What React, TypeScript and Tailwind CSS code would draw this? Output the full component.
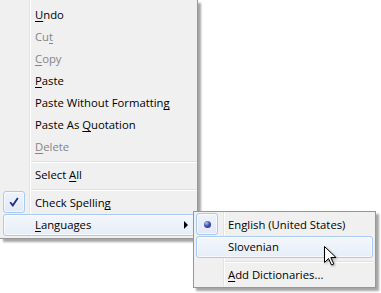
import React from "react";

type Item =
  | { sep: true }
  | {
      sep?: false;
      label: string;
      acc?: number;
      disabled?: boolean;
      checked?: boolean;
      radio?: boolean;
      hover?: boolean;
      arrow?: boolean;
    };

const mainItems: Item[] = [
  { label: "Undo", acc: 0 },
  { label: "Cut", acc: 2, disabled: true },
  { label: "Copy", acc: 0, disabled: true },
  { label: "Paste", acc: 0 },
  { label: "Paste Without Formatting", acc: 23 },
  { label: "Paste As Quotation", acc: 9 },
  { label: "Delete", acc: 0, disabled: true },
  { sep: true },
  { label: "Select All", acc: 7 },
  { sep: true },
  { label: "Check Spelling", acc: 13, checked: true },
  { label: "Languages", acc: 0, hover: true, arrow: true },
];

const subItems: Item[] = [
  { label: "English (United States)", radio: true },
  { label: "Slovenian", hover: true },
  { sep: true },
  { label: "Add Dictionaries...", acc: 0 },
];

function Label({ text, acc }: { text: string; acc?: number }) {
  if (acc === undefined) return <>{text}</>;
  return (
    <>
      {text.slice(0, acc)}
      <span className="underline underline-offset-[2px] decoration-[1px]">{text[acc]}</span>
      {text.slice(acc + 1)}
    </>
  );
}

function Row({ item, sepRight }: { item: Item; sepRight: string }) {
  if (item.sep) {
    return (
      <div className={`h-[6px] pt-[3px] ml-[28px] ${sepRight}`}>
        <div className="h-[1px] bg-[#e0e0e0]" />
        <div className="h-[1px] bg-white" />
      </div>
    );
  }
  return (
    <div className="relative h-[22px] flex items-center">
      {item.hover && (
        <div className="absolute inset-0 rounded-[3px] border border-[#a9cbf3] bg-gradient-to-b from-[#f3f7fc] to-[#e7eef8] shadow-[inset_0_0_0_1px_rgba(255,255,255,0.6)]" />
      )}
      {(item.checked || item.radio) && (
        <div className="absolute left-0 top-[-1px] w-[22px] h-[22px] rounded-[3px] border border-[#a9cbf3] bg-gradient-to-b from-[#eef3fa] to-[#e2eaf6] shadow-[inset_0_0_0_1px_rgba(255,255,255,0.6)] flex items-center justify-center">
          {item.checked && (
            <svg width="10" height="10" viewBox="0 0 10 10">
              <path d="M1.2 5.2 L3.8 8.4 L8.8 1" fill="none" stroke="#1d2a86" strokeWidth="1.8" strokeLinejoin="miter" />
            </svg>
          )}
          {item.radio && (
            <div className="w-[7px] h-[7px] rounded-full bg-[radial-gradient(circle_at_35%_30%,#b8c0f0_0%,#4452b8_45%,#1b2478_100%)]" />
          )}
        </div>
      )}
      <span
        className={`relative pl-[32px] whitespace-nowrap ${item.disabled ? "text-[#858585]" : "text-black"}`}
      >
        <Label text={item.label} acc={item.acc} />
      </span>
      {item.arrow && (
        <div className="absolute right-[7px] top-[7px] w-0 h-0 border-y-[4px] border-y-transparent border-l-[4px] border-l-black" />
      )}
    </div>
  );
}

export default function App() {
  return (
    <div
      className="relative w-[381px] h-[293px] overflow-hidden bg-white text-[11.3px] leading-none"
      style={{ fontFamily: '"Open Sans", "Noto Sans", sans-serif' }}
    >
      <div className="relative w-[198px] bg-[#f0f0f0] border-r border-b border-[#979797] pt-[4px] pb-[2px] pl-[3px] pr-[2px] shadow-[3px_3px_2px_rgba(0,0,0,0.35)]">
        <div className="absolute left-[29px] top-0 bottom-0 w-[1px] bg-[#e2e3e3]" />
        <div className="absolute left-[30px] top-0 bottom-0 w-[1px] bg-white" />
        {mainItems.map((it, i) => (
          <Row key={i} item={it} sepRight="mr-[-2px]" />
        ))}
      </div>

      <div className="absolute left-[193px] top-[211px] w-[183px] bg-[#f0f0f0] border border-[#979797] pt-[2px] pb-[1px] px-[2px] shadow-[3px_3px_2px_rgba(0,0,0,0.35)]">
        <div className="absolute left-[29px] top-0 bottom-0 w-[1px] bg-[#e2e3e3]" />
        <div className="absolute left-[30px] top-0 bottom-0 w-[1px] bg-white" />
        {subItems.map((it, i) => (
          <Row key={i} item={it} sepRight="" />
        ))}
      </div>

      <svg
        className="absolute left-[323px] top-[245px]"
        width="16"
        height="22"
        viewBox="0 0 16 22"
        style={{ filter: "drop-shadow(1px 1px 1px rgba(0,0,0,0.35))" }}
      >
        <path
          d="M1.5 1.5 L1.5 17.5 L5.5 13.5 L8.5 20 L10.8 19 L7.8 12.5 L13 12.5 Z"
          fill="white"
          stroke="black"
          strokeWidth="1"
          strokeLinejoin="miter"
        />
      </svg>
    </div>
  );
}
